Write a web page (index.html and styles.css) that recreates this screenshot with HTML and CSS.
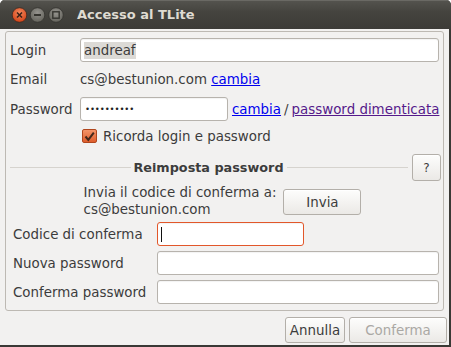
FILE: index.html
```html
<!DOCTYPE html>
<html lang="it">
<head>
    <meta charset="UTF-8">
    <title>Accesso al TLite</title>
    <link rel="stylesheet" href="styles.css">
</head>
<body>
    <div class="window">
        <div class="titlebar">
            <svg class="wm-buttons" width="66" height="18" viewBox="0 0 66 18">
                <defs>
                    <radialGradient id="gClose" cx="50%" cy="35%" r="60%">
                        <stop offset="0" stop-color="#f68a5e"/>
                        <stop offset="1" stop-color="#d4461b"/>
                    </radialGradient>
                    <radialGradient id="gGray" cx="50%" cy="35%" r="60%">
                        <stop offset="0" stop-color="#95938e"/>
                        <stop offset="1" stop-color="#67665f"/>
                    </radialGradient>
                </defs>
                <circle cx="8.5" cy="9" r="7.3" fill="url(#gClose)" stroke="#3a2a22" stroke-width="0.8"/>
                <path d="M6 6.5 L11 11.5 M11 6.5 L6 11.5" stroke="#3b2118" stroke-width="1.6"/>
                <circle cx="26.5" cy="9" r="7.3" fill="url(#gGray)" stroke="#33322e" stroke-width="0.8"/>
                <path d="M23 9 H30" stroke="#35342f" stroke-width="1.8"/>
                <circle cx="45" cy="9" r="7.3" fill="url(#gGray)" stroke="#33322e" stroke-width="0.8"/>
                <rect x="41.8" y="5.8" width="6.4" height="6.4" fill="none" stroke="#35342f" stroke-width="1.4"/>
            </svg>
            <span class="title">Accesso al TLite</span>
        </div>

        <div class="body">
            <div class="frame">
                <!-- dati account -->
                <div class="account">
                    <div class="row row-login">
                        <span class="label">Login</span>
                        <div class="entry entry-wide"><span class="selected">andreaf</span></div>
                    </div>
                    <div class="row row-email">
                        <span class="label">Email</span>
                        <span>cs@bestunion.com <a href="#" class="link">cambia</a></span>
                    </div>
                    <div class="row row-password">
                        <span class="label">Password</span>
                        <div class="entry entry-pass"><span class="dots">••••••••••</span></div>
                        <a href="#" class="link">cambia</a><span class="slash">/</span><a href="#" class="link visited">password dimenticata</a>
                    </div>
                    <div class="row row-remember">
                        <span class="check">
                            <svg width="13" height="13" viewBox="0 0 13 13"><path d="M2.5 6.5 L5.3 9.8 L10.8 2.6" fill="none" stroke="#43281b" stroke-width="2"/></svg>
                        </span>
                        <span>Ricorda login e password</span>
                    </div>
                </div>

                <!-- reimposta password -->
                <div class="reset-head">
                    <span class="rule"></span>
                    <span class="reset-title">Reimposta password</span>
                    <span class="rule"></span>
                    <button class="btn btn-help">?</button>
                </div>

                <div class="send">
                    <div class="send-text">Invia il codice di conferma a:<br>cs@bestunion.com</div>
                    <button class="btn btn-send">Invia</button>
                </div>

                <div class="reset-grid">
                    <span class="label">Codice di conferma</span>
                    <div class="entry entry-code focus"><span class="caret"></span></div>
                    <span class="label">Nuova password</span>
                    <div class="entry"></div>
                    <span class="label">Conferma password</span>
                    <div class="entry"></div>
                </div>
            </div>

            <div class="actions">
                <button class="btn btn-cancel">Annulla</button>
                <button class="btn btn-ok" disabled>Conferma</button>
            </div>
        </div>
    </div>
</body>
</html>
```

FILE: styles.css
```css
/* pagina */
body {
    margin: 0;
    font-family: "DejaVu Sans", "Noto Sans", sans-serif;
    font-size: 13.4px;
    color: #3c3c3c;
}

/* finestra */
.window {
    width: 451px;
    height: 347px;
    background: #3a3935;
    border-radius: 5px 5px 0 0;
    overflow: hidden;
    display: flex;
    flex-direction: column;
}

.titlebar {
    height: 29px;
    flex-shrink: 0;
    display: flex;
    align-items: center;
    background: linear-gradient(#55544f, #45443f 40%, #3c3b37);
    box-shadow: inset 0 1px #6a6964;
}

.wm-buttons {
    margin-left: 11px;
    margin-top: 1px;
}

.title {
    font-size: 13px;
    font-weight: bold;
    color: #dfdbd2;
}

.body {
    flex: 1;
    margin: 0 2px 2px 0;
    background: #f2f1f0;
    padding-top: 2px;
    display: flex;
    flex-direction: column;
}

/* riquadro */
.frame {
    width: 439px;
    box-sizing: border-box;
    margin-left: 5px;
    border: 1px solid #bdb9b3;
    border-radius: 3px;
    padding: 6px 4px 6px 0;
}

.account {
    padding-left: 4px;
}

.row {
    display: flex;
    align-items: center;
    white-space: nowrap;
}

.row .label {
    width: 70px;
    flex-shrink: 0;
}

.row-login, .row-password {
    height: 24px;
}

.row-email {
    height: 35px;
}

.row-remember {
    height: 30px;
    padding-left: 72px;
}

/* campi */
.entry {
    height: 24px;
    box-sizing: border-box;
    border: 1px solid #b7b3ad;
    border-radius: 3px;
    background: #fff;
    box-shadow: inset 0 1px 1px rgba(0, 0, 0, 0.05);
    display: flex;
    align-items: center;
    padding-left: 3px;
}

.entry-wide {
    flex: 1;
}

.entry-pass {
    width: 148px;
    flex-shrink: 0;
    margin-right: 4px;
}

.entry.focus {
    border-color: #e2572a;
}

.selected {
    background: #dcdad6;
    padding: 1px 0;
}

.dots {
    font-size: 8.5px;
    letter-spacing: -0.1px;
    color: #222;
    padding-left: 1px;
}

.caret {
    width: 1px;
    height: 15px;
    background: #111;
}

.link {
    color: #0000ee;
}

.link.visited {
    color: #551a8b;
}

.slash {
    margin: 0 3px;
}

.check {
    width: 15px;
    height: 14px;
    flex-shrink: 0;
    box-sizing: border-box;
    border: 1px solid #b0461d;
    border-radius: 2px;
    background: linear-gradient(#f39468, #de5d2c);
    margin-right: 6px;
    display: flex;
    align-items: center;
    justify-content: center;
}

/* intestazione reimposta */
.reset-head {
    display: flex;
    align-items: center;
    margin-top: 3px;
    height: 27px;
    padding-left: 4px;
}

.rule {
    flex: 1;
    height: 1px;
    background: #d6d3ce;
}

.reset-title {
    font-size: 12.8px;
    font-weight: bold;
    margin: 0 3px 0 2px;
}

.btn {
    font-family: "DejaVu Sans", "Noto Sans", sans-serif;
    font-size: 13.4px;
    color: #3c3c3c;
    border: 1px solid #b3afa9;
    border-radius: 3px;
    background: linear-gradient(#fdfdfc, #ebe9e6);
    box-shadow: inset 0 1px #fff;
    padding: 0;
    box-sizing: border-box;
}

.btn-help {
    width: 29px;
    height: 27px;
    margin-left: 4px;
    margin-right: -2px;
    font-size: 12px;
}

.send {
    height: 41px;
    display: flex;
    align-items: center;
    justify-content: center;
    gap: 7px;
}

.send-text {
    line-height: 16.5px;
}

.btn-send {
    width: 78px;
    height: 26px;
    margin-top: 1px;
}

.reset-grid {
    display: grid;
    grid-template-columns: 144px 1fr;
    grid-auto-rows: 24px;
    row-gap: 5px;
    align-items: center;
    padding-left: 7px;
}

.entry-code {
    width: 147px;
}

/* pulsanti in basso */
.actions {
    display: flex;
    justify-content: flex-end;
    gap: 4px;
    margin-top: 6px;
    padding-right: 2px;
}

.btn-cancel {
    height: 26px;
    width: 60px;
}

.btn-ok {
    height: 26px;
    width: 98px;
    color: #aaa8a4;
}
```
